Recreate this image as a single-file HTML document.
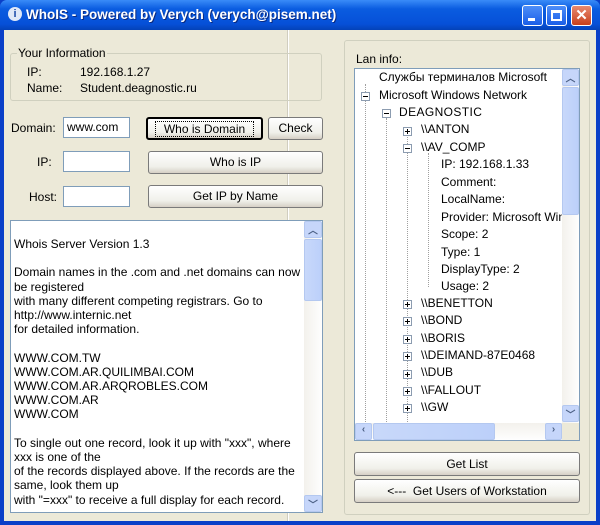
<!DOCTYPE html>
<html><head><meta charset="utf-8"><style>
*{margin:0;padding:0;box-sizing:border-box}
body{width:600px;height:525px;overflow:hidden;background:#0a3fc8;font-family:"Liberation Sans","Noto Sans CJK SC",sans-serif;font-size:12px;color:#000;position:relative}
.a{position:absolute}
.title{left:0;top:0;width:600px;height:30px;background:linear-gradient(#3a8cf8,#0a5ce0 30%,#0650d8 80%,#0442b8);border-radius:7px 7px 0 0}
.tt{left:26px;top:7px;color:#fff;font-weight:bold;font-size:13.5px;text-shadow:1px 1px #0a2a80}
.win{left:4px;top:30px;width:592px;height:491px;background:#ece9d8}
.tb{width:21px;height:21px;top:5px;border:1px solid #fff;border-radius:3px;background:linear-gradient(#4d8ef8,#1a5ee8)}
.grp{border:1px solid #d0d0bf;border-radius:3px}
.btn{border:1px solid #7a7a7a;border-radius:3px;background:linear-gradient(#fff,#f0f0ea 70%,#d6d0c5);text-align:center;line-height:21px}
.inp{background:#fff;border:1px solid #7f9db9;padding-left:3px;line-height:19px}
.sb{background:linear-gradient(90deg,#f3f1ec,#fefefe)}
.thumb{border:1px solid #b4c8f0;border-radius:2px;background:linear-gradient(90deg,#c8d8fa,#bcd0fa)}
.ar{border:1px solid #b4c8f0;border-radius:2px;background:#c6d6fa;color:#4d6185;text-align:center;font-size:10px;font-weight:bold}
.t{position:absolute;white-space:nowrap;height:17px;line-height:17px}
.pm{position:absolute;width:9px;height:9px;border:1px solid #8c9cb0;background:#fff}
.pm:before{content:"";position:absolute;left:1px;top:3px;width:5px;height:1px;background:#000}
.pp:after{content:"";position:absolute;left:3px;top:1px;width:1px;height:5px;background:#000}
.txt{line-height:14.2px}
</style></head><body>
<div class="a title"></div>
<div class="a" style="left:8px;top:7px;width:14px;height:14px;border-radius:50%;background:#dfe8f8;color:#1a4aa8;font-weight:bold;font-size:11px;text-align:center;line-height:14px">i</div>
<div class="a tt">WhoIS - Powered by Verych (verych@pisem.net)</div>
<div class="a tb" style="left:522px"><div class="a" style="left:5px;top:12px;width:7px;height:3px;background:#fff"></div></div>
<div class="a tb" style="left:546px"><div class="a" style="left:4px;top:4px;width:11px;height:11px;border:2px solid #fff;border-top-width:3px"></div></div>
<div class="a tb" style="left:571px;background:linear-gradient(#e88a70,#c8401c);color:#fff;font-weight:bold;font-size:15px;text-align:center;line-height:19px">✕</div>
<div class="a win"></div>
<div class="a" style="left:287px;top:30px;width:1px;height:491px;background:#d0cdbf"></div>
<div class="a" style="left:288px;top:30px;width:1px;height:491px;background:#fff"></div>

<div class="a grp" style="left:10px;top:53px;width:312px;height:48px"></div>
<div class="a" style="left:17px;top:46px;background:#ece9d8;padding:0 1px">Your Information</div>
<div class="a" style="left:27px;top:65px">IP:</div>
<div class="a" style="left:80px;top:65px">192.168.1.27</div>
<div class="a" style="left:27px;top:81px">Name:</div>
<div class="a" style="left:80px;top:81px">Student.deagnostic.ru</div>

<div class="a" style="left:11px;top:121px">Domain:</div>
<div class="a inp" style="left:63px;top:117px;width:67px;height:21px">www.com</div>
<div class="a btn" style="left:146px;top:117px;width:117px;height:23px;border:2px solid #000"><span style="outline:1px dotted #000;padding:0 8px">Who is Domain</span></div>
<div class="a btn" style="left:268px;top:117px;width:55px;height:23px">Check</div>

<div class="a" style="left:37px;top:155px">IP:</div>
<div class="a inp" style="left:63px;top:151px;width:67px;height:21px"></div>
<div class="a btn" style="left:148px;top:151px;width:175px;height:23px">Who is IP</div>

<div class="a" style="left:29px;top:190px">Host:</div>
<div class="a inp" style="left:63px;top:186px;width:67px;height:21px"></div>
<div class="a btn" style="left:148px;top:185px;width:175px;height:23px">Get IP by Name</div>

<div class="a" style="left:10px;top:220px;width:313px;height:293px;background:#fff;border:1px solid #7f9db9"></div>
<div class="a txt" style="left:14px;top:237px;width:290px">Whois Server Version 1.3<br><br>Domain names in the .com and .net domains can now be registered<br>with many different competing registrars. Go to http://www.internic.net<br>for detailed information.<br><br>WWW.COM.TW<br>WWW.COM.AR.QUILIMBAI.COM<br>WWW.COM.AR.ARQROBLES.COM<br>WWW.COM.AR<br>WWW.COM<br><br>To single out one record, look it up with "xxx", where xxx is one of the<br>of the records displayed above. If the records are the same, look them up<br>with "=xxx" to receive a full display for each record.</div>
<div class="a sb" style="left:304px;top:221px;width:18px;height:291px"></div>
<div class="a ar" style="left:304px;top:221px;width:18px;height:17px">︿</div>
<div class="a thumb" style="left:304px;top:239px;width:18px;height:62px"></div>
<div class="a ar" style="left:304px;top:495px;width:18px;height:17px">﹀</div>

<div class="a grp" style="left:344px;top:40px;width:246px;height:475px"></div>
<div class="a" style="left:356px;top:52px">Lan info:</div>
<div class="a" style="left:354px;top:68px;width:226px;height:373px;background:#fff;border:1px solid #7f9db9"></div>
<div class="a" style="left:365px;top:84px;width:0;height:340px;border-left:1px dotted #a0a0a0"></div>
<div class="a" style="left:386px;top:118px;width:0;height:306px;border-left:1px dotted #a0a0a0"></div>
<div class="a" style="left:407px;top:135px;width:0;height:289px;border-left:1px dotted #a0a0a0"></div>
<div class="a" style="left:428px;top:153px;width:0;height:134px;border-left:1px dotted #a0a0a0"></div>
<div class="t" style="left:379px;top:69px">Службы терминалов Microsoft</div>
<div class="pm" style="left:361px;top:92px"></div><div class="t" style="left:379px;top:87px">Microsoft Windows Network</div>
<div class="pm" style="left:382px;top:109px"></div><div class="t" style="left:399px;top:104px;letter-spacing:.4px">DEAGNOSTIC</div>
<div class="pm pp" style="left:403px;top:127px"></div><div class="t" style="left:421px;top:121px">\\ANTON</div>
<div class="pm" style="left:403px;top:144px"></div><div class="t" style="left:421px;top:139px">\\AV_COMP</div>
<div class="t" style="left:441px;top:156px">IP: 192.168.1.33</div>
<div class="t" style="left:441px;top:174px">Comment:</div>
<div class="t" style="left:441px;top:191px">LocalName:</div>
<div class="t" style="left:441px;top:209px;width:121px;overflow:hidden">Provider: Microsoft Windows</div>
<div class="t" style="left:441px;top:226px">Scope: 2</div>
<div class="t" style="left:441px;top:244px">Type: 1</div>
<div class="t" style="left:441px;top:261px">DisplayType: 2</div>
<div class="t" style="left:441px;top:278px">Usage: 2</div>
<div class="pm pp" style="left:403px;top:300px"></div><div class="t" style="left:421px;top:295px">\\BENETTON</div>
<div class="pm pp" style="left:403px;top:317px"></div><div class="t" style="left:421px;top:312px">\\BOND</div>
<div class="pm pp" style="left:403px;top:335px"></div><div class="t" style="left:421px;top:330px">\\BORIS</div>
<div class="pm pp" style="left:403px;top:352px"></div><div class="t" style="left:421px;top:347px">\\DEIMAND-87E0468</div>
<div class="pm pp" style="left:403px;top:370px"></div><div class="t" style="left:421px;top:364px">\\DUB</div>
<div class="pm pp" style="left:403px;top:387px"></div><div class="t" style="left:421px;top:382px">\\FALLOUT</div>
<div class="pm pp" style="left:403px;top:404px"></div><div class="t" style="left:421px;top:399px">\\GW</div>
<div class="a sb" style="left:562px;top:69px;width:17px;height:354px"></div>
<div class="a ar" style="left:562px;top:69px;width:17px;height:17px">︿</div>
<div class="a thumb" style="left:562px;top:87px;width:17px;height:128px"></div>
<div class="a ar" style="left:562px;top:405px;width:17px;height:17px">﹀</div>
<div class="a" style="left:355px;top:423px;width:207px;height:17px;background:linear-gradient(#f3f1ec,#fefefe)"></div>
<div class="a ar" style="left:355px;top:423px;width:17px;height:17px">‹</div>
<div class="a thumb" style="left:373px;top:423px;width:122px;height:17px"></div>
<div class="a ar" style="left:545px;top:423px;width:17px;height:17px">›</div>
<div class="a" style="left:562px;top:423px;width:17px;height:17px;background:#ece9d8"></div>
<div class="a btn" style="left:354px;top:452px;width:226px;height:24px;line-height:22px">Get List</div>
<div class="a btn" style="left:354px;top:479px;width:226px;height:24px;line-height:22px">&lt;--- &nbsp;Get Users of Workstation</div>
</body></html>
